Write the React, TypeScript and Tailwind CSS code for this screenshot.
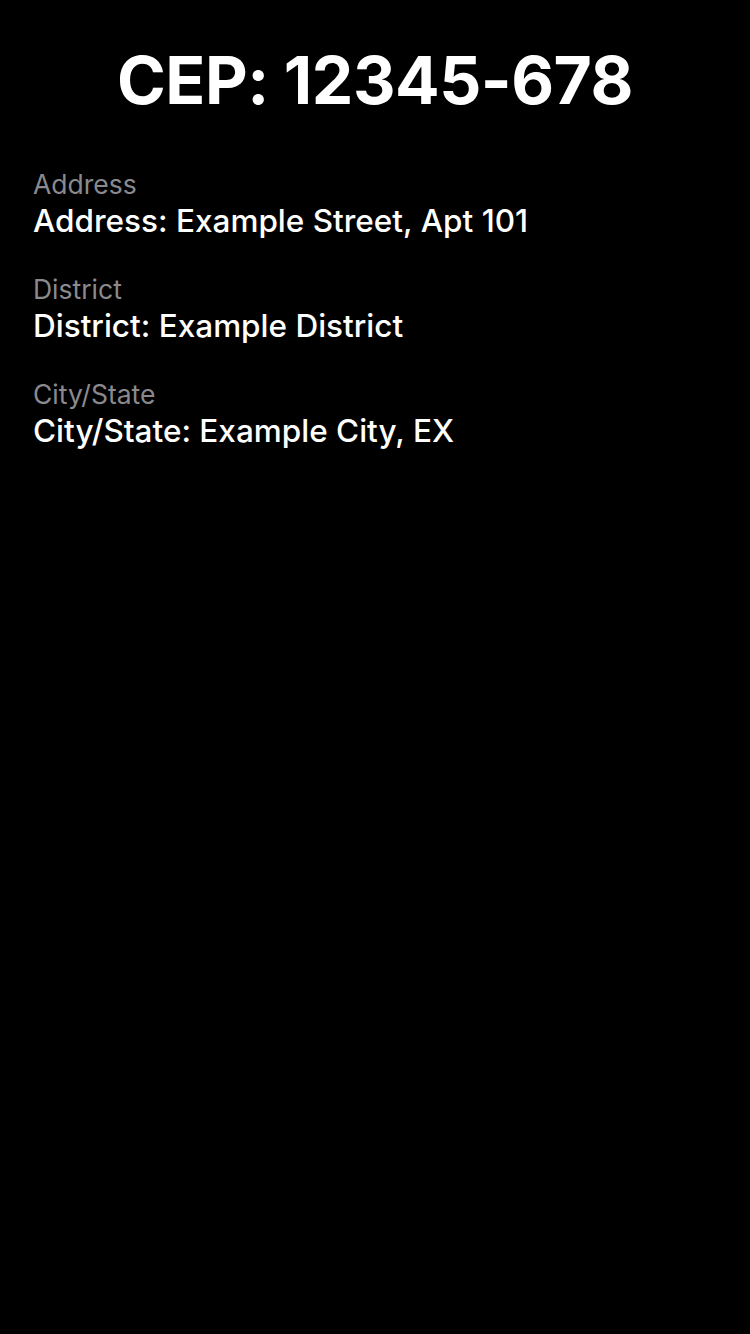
export default function App() {
  const rows = [
    ["Address", "Address: Example Street, Apt 101"],
    ["District", "District: Example District"],
    ["City/State", "City/State: Example City, EX"],
  ];
  return (
    <div
      className="w-[750px] h-[1334px] bg-black text-white"
      style={{ fontFamily: "Inter, 'Noto Sans', sans-serif" }}
    >
      <div className="pt-[40px] flex justify-center">
        <h1 className="text-[66px] leading-[80px] font-bold tracking-[-0.5px]">CEP: 12345-678</h1>
      </div>
      <div className="px-[33px] pt-[47px] flex flex-col gap-[31px]">
        {rows.map(([l, v]) => (
          <div key={l} className="flex flex-col">
            <div className="text-[26.5px] leading-[34px] text-[#8a8a8e]">{l}</div>
            <div className="text-[31.5px] leading-[40px] font-medium">{v}</div>
          </div>
        ))}
      </div>
    </div>
  );
}
